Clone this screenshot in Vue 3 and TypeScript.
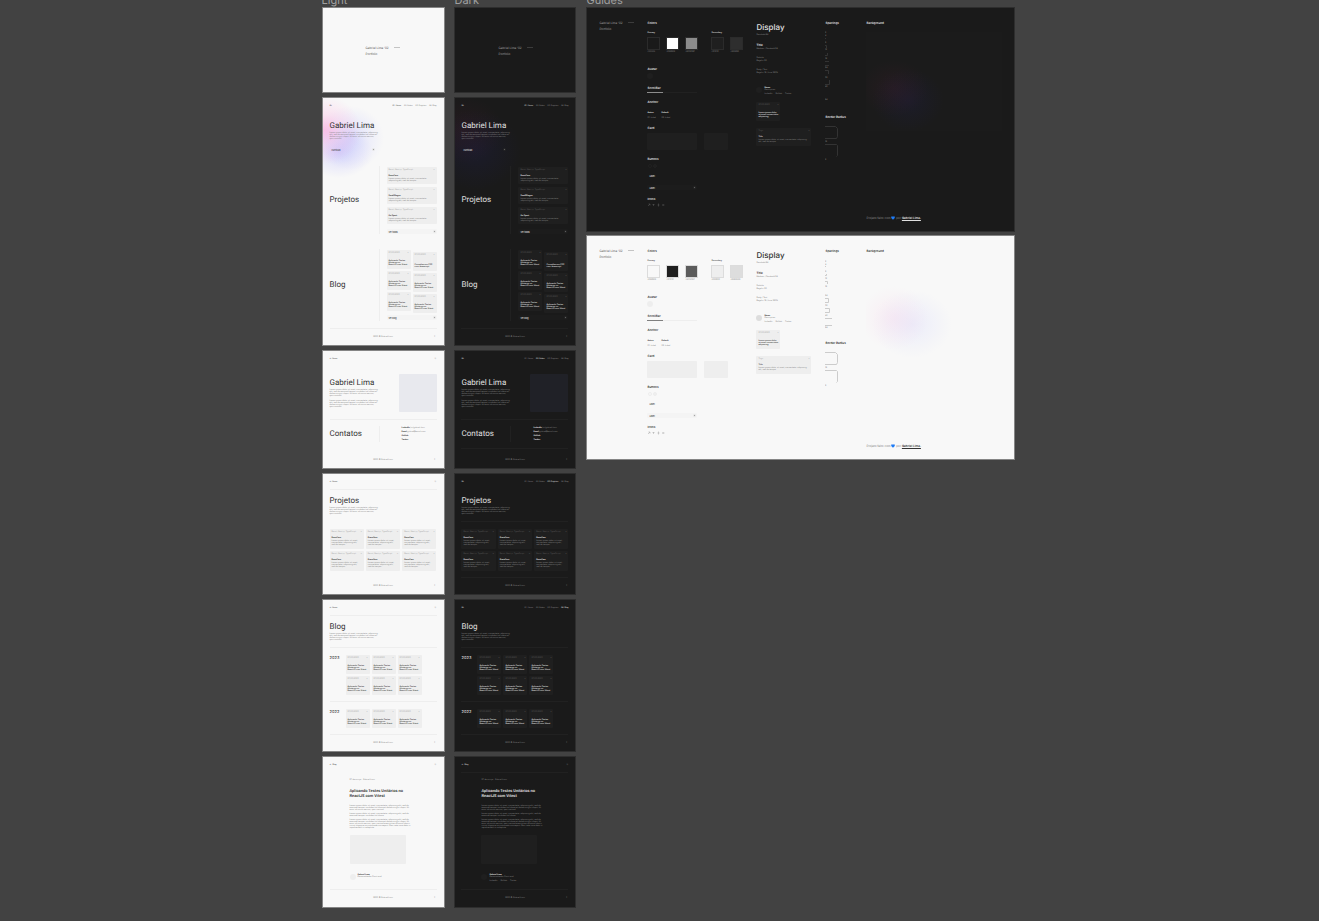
<script setup lang="ts">
type Theme = 'light' | 'dark'

interface Mark {
  d?: string
  label?: string
  y?: number
}

const themes: Theme[] = ['light', 'dark']
const guideThemes: Theme[] = ['dark', 'light']
const titles: Record<Theme, string> = { light: 'Light', dark: 'Dark' }
const links = ['01. Home', '02. Sobre', '03. Projetos', '04. Blog']
const lorem =
  'Lorem ipsum dolor sit amet, consectetur adipiscing elit, sed do eiusmod tempor incididunt ut labore et dolore magna aliqua. Ut enim ad minim veniam, quis nostrud.'
const mediumLorem = 'Lorem ipsum dolor sit amet, consectetur adipiscing elit, sed do eiusmod tempor incididunt ut labore.'
const longLorem =
  'Lorem ipsum dolor sit amet, consectetur adipiscing elit, sed do eiusmod tempor incididunt ut labore et dolore magna aliqua. Ut enim ad minim veniam, quis nostrud exercitation ullamco laboris nisi ut aliquip ex ea commodo consequat. Duis aute irure dolor in reprehenderit in voluptate.'
const shortLorem = 'Lorem ipsum dolor sit amet, consectetur adipiscing elit, sed do tempor.'
const projects = ['BrainCare', 'SmallBlogue', 'Go Sport']
const postTitle = 'Aplicando Testes Unitários no ReactJS com Vitest'
const rightPosts = ['Consultas em CSS com Javascript', postTitle, postTitle]
const contacts = [
  ['LinkedIn', '/in/gabriel-lima'],
  ['Email', 'gabriel@email.com'],
  ['GitHub', ''],
  ['Twitter', ''],
]
const years = [
  { year: '2023', count: 6 },
  { year: '2022', count: 3 },
]
const swatches: Record<Theme, string[][]> = {
  dark: [['s-base', '#1A1A1A'], ['s-white', '#F8F8F8'], ['s-mid', '#8C8C8C'], ['s-card', '#1F1F1F'], ['s-line', '#2E2E2E']],
  light: [['s-paper', '#F8F8F8'], ['s-ink', '#1F1F1F'], ['s-deep', '#5C5C5C'], ['s-soft', '#EEEEEE'], ['s-edge', '#DDDDDD']],
}
const marks: Record<Theme, Mark[]> = {
  dark: [
    { label: '2', y: 3 }, { label: '4', y: 6 }, { d: 'M0 8.5H1' }, { label: '8', y: 13 },
    { d: 'M0 15.5H1.5V18' }, { label: '12', y: 20 }, { d: 'M2.5 23V25.5H0' }, { label: '16', y: 29 },
    { d: 'M0 31.5H4M0 35.5H4' }, { label: '24', y: 38 }, { d: 'M0 40.5H3.5V44' }, { label: '32', y: 48 },
    { d: 'M4.5 50V54.5H0' }, { label: '40', y: 57 }, { label: '64', y: 70 },
  ],
  light: [
    { label: '2', y: 4 }, { label: '4', y: 7 }, { d: 'M0 8.5H1' }, { label: '8', y: 14 },
    { d: 'M1.5 16V17.5H0' }, { label: '12', y: 21 }, { d: 'M0 23.5H2.5V26' }, { label: '16', y: 29 },
    { label: '24', y: 38 }, { d: 'M0 40.5H3.5V44.5H0' }, { label: '32', y: 48 },
    { d: 'M0 50.5H4.5V54.5H0' }, { label: '40', y: 58 }, { d: 'M0 60.5H7M0 67.5H7' }, { label: '64', y: 70 },
  ],
}
</script>

<template>
  <main class="canvas">
    <section v-for="(t, i) in themes" :key="t" class="board" :class="[t, i === 0 ? 'first' : 'second']">
      <h2 class="label">{{ titles[t] }}</h2>

      <article class="frame cover">
        <div class="brand">
          <p>Gabriel Lima '02 <i class="dash"></i></p>
          <p>Portfolio</p>
        </div>
      </article>

      <article class="frame home">
        <div class="glow"></div>
        <header class="nav">
          <a href="#" class="logo">GL</a>
          <nav><a v-for="(l, n) in links" :key="l" href="#" :class="{ on: n === 0 }">{{ l }}</a></nav>
        </header>
        <div class="hero">
          <h1>Gabriel Lima</h1>
          <p class="text lines4">{{ lorem }}</p>
          <button type="button" class="wide"><span>Currículo</span><i class="dot"></i></button>
        </div>
        <div class="split projects">
          <h1>Projetos</h1>
          <div class="side">
            <div class="stack">
              <div v-for="p in projects" :key="p" class="card">
                <div class="meta"><span>React, Next.js, TypeScript</span><i class="arrow">↗</i></div>
                <h3>{{ p }}</h3>
                <p class="desc">{{ shortLorem }}</p>
              </div>
            </div>
            <button type="button" class="wide more"><span>Ver todos</span><i class="dot"></i></button>
          </div>
        </div>
        <div class="split blog">
          <h1>Blog</h1>
          <div class="side">
            <div class="pair">
              <div class="posts">
                <div v-for="n in 3" :key="n" class="card post">
                  <div class="meta"><span>27/03/2023</span><i class="arrow">↗</i></div>
                  <h4>{{ postTitle }}</h4>
                </div>
              </div>
              <div class="posts lower">
                <div v-for="(p, n) in rightPosts" :key="n" class="card post">
                  <div class="meta"><span>27/03/2023</span><i class="arrow">↗</i></div>
                  <h4>{{ p }}</h4>
                </div>
              </div>
            </div>
            <button type="button" class="wide more"><span>Ver blog</span><i class="dot"></i></button>
          </div>
        </div>
        <hr class="gap7" />
        <footer><span>2023 © Gabriel Lima</span><a href="#">↑</a></footer>
      </article>

      <article class="frame about">
        <header class="nav">
          <a href="#" class="logo">{{ t === 'light' ? '← Home' : 'GL' }}</a>
          <a v-if="t === 'light'" href="#">☼</a>
          <nav v-else><a v-for="(l, n) in links" :key="l" href="#" :class="{ on: n === 1 }">{{ l }}</a></nav>
        </header>
        <div class="intro">
          <div class="bio">
            <h1>Gabriel Lima</h1>
            <p class="text lines4">{{ lorem }}</p>
            <p class="text lines4 next">{{ lorem }}</p>
          </div>
          <div class="photo"></div>
        </div>
        <hr class="gap7" />
        <div class="split contact">
          <h1>Contatos</h1>
          <ul>
            <li v-for="c in contacts" :key="c[0]"><b>{{ c[0] }}</b> {{ c[1] }}</li>
          </ul>
        </div>
        <hr class="gap6 dark-only" />
        <footer class="low"><span>2023 © Gabriel Lima</span><a href="#">↑</a></footer>
      </article>

      <article class="frame list">
        <header class="nav">
          <a href="#" class="logo">{{ t === 'light' ? '← Home' : 'GL' }}</a>
          <a v-if="t === 'light'" href="#">☼</a>
          <nav v-else><a v-for="(l, n) in links" :key="l" href="#" :class="{ on: n === 2 }">{{ l }}</a></nav>
        </header>
        <hr class="gap6 light-only" />
        <div class="head">
          <h1>Projetos</h1>
          <p class="text lines4">{{ lorem }}</p>
        </div>
        <hr class="gap6 dark-only" />
        <div class="grid">
          <div v-for="n in 6" :key="n" class="card tall">
            <div class="meta"><span>React, Next.js, TypeScript</span><i class="arrow">↗</i></div>
            <h3>BrainCare</h3>
            <p class="desc three">{{ shortLorem }}</p>
          </div>
        </div>
        <hr class="gap6 dark-only" />
        <footer><span>2023 © Gabriel Lima</span><a href="#">↑</a></footer>
      </article>

      <article class="frame archive">
        <header class="nav">
          <a href="#" class="logo">{{ t === 'light' ? '← Home' : 'GL' }}</a>
          <a v-if="t === 'light'" href="#">☼</a>
          <nav v-else><a v-for="(l, n) in links" :key="l" href="#" :class="{ on: n === 3 }">{{ l }}</a></nav>
        </header>
        <hr class="gap6 light-only" />
        <div class="head">
          <h1>Blog</h1>
          <p class="text lines4">{{ lorem }}</p>
        </div>
        <template v-for="y in years" :key="y.year">
          <hr class="gap6" />
          <div class="year">
            <h2>{{ y.year }}</h2>
            <div class="trio">
              <div v-for="n in y.count" :key="n" class="card post">
                <div class="meta"><span>27/03/2023</span><i class="arrow">↗</i></div>
                <h4>{{ postTitle }}</h4>
              </div>
            </div>
          </div>
        </template>
        <hr class="gap6" />
        <footer><span>2023 © Gabriel Lima</span><a href="#">↑</a></footer>
      </article>

      <article class="frame single">
        <header class="nav">
          <a href="#" class="logo">←&nbsp; Blog</a>
          <a href="#">☼</a>
        </header>
        <hr class="gap6 dark-only" />
        <div class="entry">
          <p class="date">27 de março &nbsp; Gabriel Lima</p>
          <h1>Aplicando Testes Unitários no ReactJS com Vitest</h1>
          <p class="body l3">{{ lorem }}</p>
          <p class="body l2">{{ mediumLorem }}</p>
          <p class="body l5">{{ longLorem }}</p>
          <div class="figure"></div>
          <div class="author">
            <i class="avatar"></i>
            <div>
              <b>Gabriel Lima</b>
              <p>Desenvolvedor Front-end</p>
              <p v-if="t === 'dark'" class="social"><a href="#">LinkedIn</a><a href="#">GitHub</a><a href="#">Twitter</a></p>
            </div>
          </div>
        </div>
        <hr class="gap6" />
        <footer><span>2023 © Gabriel Lima</span><a href="#">↑</a></footer>
      </article>
    </section>

    <section class="board guides">
      <h2 class="label">Guides</h2>
      <article v-for="t in guideThemes" :key="t" class="frame guide" :class="t">
        <div class="brand">
          <p>Gabriel Lima '02 <i class="dash"></i></p>
          <p>Portfolio</p>
        </div>

        <div class="tokens">
          <h3>Colors</h3>
          <div class="names"><span>Primary</span><span>Secondary</span></div>
          <div class="swatches">
            <div v-for="s in swatches[t]" :key="s[1]"><i :class="s[0]"></i><small>{{ s[1] }}</small></div>
          </div>
          <h3 class="m14">Avatar</h3>
          <i class="avatar"></i>
          <h3 class="m7">ScrollBar</h3>
          <div class="track"><i></i></div>
          <h3 class="m7">Anchor</h3>
          <div class="anchors"><b>Active</b><b>Default</b><a href="#">01. Label</a><a href="#">02. Label</a></div>
          <h3 class="m7">Card</h3>
          <div class="blocks"><i></i><i></i></div>
          <h3 class="m7">Buttons</h3>
          <div class="rounds"><i></i><i></i></div>
          <button type="button" class="chip">Label</button>
          <button type="button" class="wide"><span>Label</span><i class="dot"></i></button>
          <h3 class="m7">Icons</h3>
          <svg class="icons" viewBox="0 0 20 4" aria-hidden="true">
            <path d="M1 3 3 1M1.5 1H3V2.5M6.5 3V1M5.5 2 6.5 1 7.5 2M11.5 .5V3.5M10.5 2H12.5M15.5 2H17.5M16.5 1 15.5 2 16.5 3" />
          </svg>
        </div>

        <div class="type">
          <h1>Display</h1>
          <p>Semibold 64</p>
          <h3 class="m7">Title</h3>
          <p class="m1">Medium / Semibold 24</p>
          <p class="m7">Subtitle</p>
          <p class="m1">Regular 20</p>
          <p class="m7">Body / Text</p>
          <p class="m1">Regular 16 / Line 160%</p>
          <div class="author">
            <i class="avatar"></i>
            <div>
              <b>Name</b>
              <p>Description</p>
              <p class="social"><a href="#">LinkedIn</a><a href="#">GitHub</a><a href="#">Twitter</a></p>
            </div>
          </div>
          <div class="card post m7">
            <div class="meta"><span>27/03/2023</span><i class="arrow">↗</i></div>
            <h4>Lorem ipsum dolor sit amet consectetur adipiscing</h4>
          </div>
          <div class="card sample m7">
            <div class="meta"><span>Tags</span><i class="arrow">↗</i></div>
            <h3>Title</h3>
            <p class="desc">{{ shortLorem }}</p>
          </div>
        </div>

        <div class="scale">
          <h3>Spacings</h3>
          <svg class="steps" viewBox="0 0 20 80" aria-hidden="true">
            <template v-for="(m, n) in marks[t]" :key="n">
              <path v-if="m.d" :d="m.d" />
              <text v-else x="0" :y="m.y">{{ m.label }}</text>
            </template>
          </svg>
          <h3>Border Radius</h3>
          <svg class="radii" viewBox="0 0 20 42" aria-hidden="true">
            <path d="M0 7.5H10.5L12.5 9.5V17.5L11.5 19.5H0M0 25.5H11.5L12.5 26.5V36.5L11.5 37.5" />
            <text x="0" y="23">16</text>
            <text x="0" y="41">8</text>
          </svg>
        </div>

        <div class="backdrop">
          <h3>Background</h3>
          <div class="aura"></div>
          <p class="credit">
            Projeto feito com
            <svg viewBox="0 0 8 8" role="img" aria-label="coração"><path d="M4 7.5C1.6 5.6 .3 4 .3 2.4 .3 .3 2.9 0 4 1.7 5.1 0 7.7 .3 7.7 2.4 7.7 4 6.4 5.6 4 7.5Z" /></svg>
            por <a href="#">Gabriel Lima.</a>
          </p>
        </div>
      </article>
    </section>
  </main>
</template>

<style>
html,
body {
  background: #424242;
}
</style>

<style scoped>
* {
  box-sizing: border-box;
  margin: 0;
  padding: 0;
}
.canvas {
  display: grid;
  grid-template-columns: 322fr 123fr 10fr 122fr 10fr 428fr 304fr;
  align-items: start;
  min-height: 100vh;
  overflow: hidden;
  background: #424242;
  font-family: Inter, Roboto, 'Liberation Sans', sans-serif;
  text-rendering: geometricPrecision;
}
.board {
  display: flex;
  flex-direction: column;
  gap: 4px;
}
.first { grid-column: 2; }
.second { grid-column: 4; }
.guides {
  grid-column: 6;
  gap: 3px;
}
.label {
  height: 7px;
  margin-bottom: -4px;
  display: flex;
  align-items: flex-end;
  font-size: 11px;
  line-height: 14px;
  font-weight: 400;
  color: #a0a0a0;
}
.guides .label { margin-bottom: -3px; }
.light {
  --bg: #f8f8f8;
  --edge: #858585;
  --ink: #333;
  --soft: #808080;
  --faint: #a4a4a4;
  --card: #eeeeee;
  --line: #eeeeee;
  --button: #f4f4f4;
  --photo: #e8e9ee;
  --stroke: #ccc;
}
.dark {
  --bg: #1a1a1a;
  --edge: #2e2e2e;
  --ink: #e0e0e0;
  --soft: #8c8c8c;
  --faint: #5c5c5c;
  --card: #1f1f1f;
  --line: #212121;
  --button: #1c1c1c;
  --photo: #202127;
  --stroke: #484848;
}
.frame {
  position: relative;
  display: flex;
  flex-direction: column;
  padding: 7px;
  border: 1px solid var(--edge);
  background: var(--bg);
  color: var(--ink);
  font-size: 2px;
  line-height: 2px;
}
.board.dark .frame { padding-left: 6px; }
.board .frame.cover { min-height: 86px; padding: 37px 7px 0 43px; }
.home { min-height: 249px; }
.about { min-height: 119px; }
.list { min-height: 122px; }
.archive { min-height: 153px; }
.single { min-height: 152px; }
a { color: inherit; text-decoration: none; }
i { font-style: normal; }
ul { list-style: none; }
.brand {
  font-size: 3px;
  line-height: 6px;
  white-space: nowrap;
  color: #a0a0a0;
}
.light .brand, .light.guide .brand { color: #555; }
.guide .brand { margin-top: -1px; }
.dash {
  display: inline-block;
  width: 6px;
  height: 1px;
  margin-left: 4px;
  vertical-align: 1px;
  background: var(--faint);
}
.dark .dash { background: #3c3c3c; }
.light .dash { background: #c4c4c4; }
.glow {
  position: absolute;
  inset: 0;
  background:
    radial-gradient(ellipse 36px 34px at 2px 32px, rgba(255, 160, 218, 0.6), rgba(255, 170, 222, 0.28) 45%, transparent),
    radial-gradient(ellipse 34px 26px at 16px 54px, rgba(165, 165, 255, 0.42), rgba(175, 175, 255, 0.2) 50%, transparent),
    radial-gradient(ellipse 34px 32px at 27px 40px, rgba(165, 170, 255, 0.38), rgba(180, 182, 255, 0.18) 50%, transparent);
}
.dark .glow {
  background:
    radial-gradient(ellipse 40px 34px at 8px 32px, rgba(110, 30, 60, 0.13), transparent),
    radial-gradient(ellipse 46px 40px at 20px 52px, rgba(35, 35, 130, 0.16), transparent);
}
.glow ~ * { position: relative; }
.nav {
  display: flex;
  justify-content: space-between;
  height: 2px;
  color: var(--soft);
  white-space: nowrap;
  font-family: Roboto, Inter, sans-serif;
}
.nav nav { display: flex; gap: 3px; }
.nav .logo, .nav .on { color: var(--ink); }
h1 {
  font-family: Roboto, Inter, sans-serif;
  font-size: 8px;
  line-height: 10px;
  font-weight: 400;
}
.hero { margin-top: 14px; width: 49px; }
.text {
  width: 49px;
  margin-top: 1px;
  color: var(--soft);
}
.lines4 { height: 8px; }
.text.next { margin-top: 3px; }
.wide {
  display: flex;
  align-items: center;
  justify-content: space-between;
  width: 100%;
  height: 5px;
  padding: 0 1px 0 2px;
  border: 0;
  border-radius: 1px;
  background: var(--button);
  color: var(--ink);
  font: inherit;
  line-height: 2px;
  font-weight: 500;
}
.hero .wide { width: 46px; margin-top: 7px; background: transparent; }
.dot {
  width: 3px;
  height: 3px;
  border-radius: 50%;
  border: 1px solid var(--line);
  background: var(--faint);
}
.split {
  display: grid;
  grid-template-columns: 50px 1fr;
  column-gap: 7px;
}
.split h1 {
  display: flex;
  align-items: center;
  border-right: 1px solid var(--line);
}
.projects { margin-top: 14px; min-height: 68px; }
.blog { margin-top: 15px; min-height: 72px; }
.side {
  display: flex;
  flex-direction: column;
  padding-top: 1px;
}
.stack { display: grid; gap: 3px; }
.projects .more { margin-top: 5px; }
.blog .more { margin-top: 2px; }
.card {
  height: 17px;
  padding: 2px;
  border-radius: 1px;
  background: var(--card);
}
.meta {
  display: flex;
  justify-content: space-between;
  white-space: nowrap;
  color: var(--faint);
}
.meta .arrow { color: var(--soft); }
.card h3 {
  margin-top: 4px;
  font-size: 2px;
  line-height: 2px;
  font-weight: 700;
}
.desc {
  height: 4px;
  margin-top: 1px;
  width: 95%;
  color: var(--soft);
}
.desc.three { height: 6px; }
.pair {
  display: grid;
  grid-template-columns: 24px 24px;
  gap: 2px;
}
.posts { display: grid; gap: 2px; align-content: start; }
.lower { padding-top: 2px; }
.card.post {
  display: flex;
  flex-direction: column;
  justify-content: space-between;
  height: 19px;
  padding: 2px 2px 3px;
}
.post h4 { font-size: 2px; line-height: 2px; font-weight: 600; }
hr {
  border: 0;
  height: 1px;
  flex: none;
  background: var(--line);
}
.gap6 { margin-top: 6px; }
.gap7 { margin-top: 7px; }
.light .dark-only, .dark .light-only { background: transparent; }
footer {
  position: relative;
  display: grid;
  grid-template-columns: 1fr auto 1fr;
  margin-top: 7px;
  color: var(--soft);
}
footer span { grid-column: 2; white-space: nowrap; }
footer a { justify-self: end; padding-right: 1px; }
footer.low { margin-top: 10px; }
.intro {
  display: flex;
  justify-content: space-between;
  margin-top: 14px;
}
.bio { padding-top: 4px; }
.photo {
  width: 38px;
  height: 38px;
  border-radius: 1px;
  background: var(--photo);
}
.contact { margin-top: 6px; min-height: 16px; }
.contact ul {
  padding-left: 15px;
  line-height: 4px;
  color: var(--soft);
  white-space: nowrap;
}
.contact b { color: var(--ink); }
.head { margin-top: 6px; }
.grid {
  display: grid;
  grid-template-columns: repeat(3, 1fr);
  gap: 2px;
  margin-top: 7px;
}
.card.tall { height: 20px; }
.year {
  display: grid;
  grid-template-columns: 16px 1fr;
  margin-top: 7px;
}
.year h2 {
  font-size: 4px;
  line-height: 6px;
  font-weight: 400;
}
.trio {
  display: grid;
  grid-template-columns: repeat(3, 24px);
  gap: 2px;
}
.entry { padding: 6px 20px 0; }
.date { color: var(--soft); white-space: nowrap; }
.entry h1 {
  margin-top: 7px;
  font-size: 4px;
  line-height: 5px;
  font-weight: 600;
}
.body {
  width: 64px;
  margin-top: 2px;
  color: var(--soft);
}
.l3 { height: 6px; margin-top: 7px; }
.l2 { height: 4px; }
.l5 { height: 10px; }
.figure {
  width: 56px;
  height: 29px;
  margin-top: 6px;
  border-radius: 1px;
  background: var(--card);
}
.author {
  display: flex;
  gap: 2px;
  margin-top: 10px;
  min-height: 9px;
  color: var(--soft);
  white-space: nowrap;
}
.author b { display: block; color: var(--ink); }
.avatar {
  display: block;
  flex: none;
  width: 6px;
  height: 6px;
  border-radius: 50%;
  background: var(--card);
}
.social { display: flex; gap: 3px; margin-top: 2px; }

.guide {
  display: grid;
  grid-template-columns: 48px 109px 69px 41px 1fr;
  min-height: 225px;
  padding: 13px 12px 11px;
}
.guide h3 {
  font-size: 3px;
  line-height: 4px;
  font-weight: 600;
  white-space: nowrap;
}
.guide .card h3 { font-size: 2px; line-height: 2px; }
.m1 { margin-top: 1px; }
.m7 { margin-top: 7px; }
.m14 { margin-top: 14px; }
.names {
  display: grid;
  grid-template-columns: 64px 1fr;
  margin-top: 7px;
  font-weight: 600;
}
.swatches { display: flex; gap: 6px; margin-top: 3px; }
.swatches div { width: 13px; }
.swatches div:nth-child(4) { margin-left: 7px; }
.swatches i {
  display: block;
  height: 13px;
  border: 1px solid var(--swatch-edge);
}
.guide.dark { --swatch-edge: #2b2b2b; }
.guide.light { --swatch-edge: #dcdcdc; }
.swatches small {
  display: block;
  margin-top: 1px;
  font-size: 2px;
  color: var(--soft);
}
.s-base { background: #1a1a1a; }
.s-white { background: #fff; }
.s-mid { background: #8c8c8c; }
.s-card { background: #1f1f1f; }
.s-line { background: #2e2e2e; }
.s-paper { background: #f8f8f8; }
.s-ink { background: #1f1f1f; }
.s-deep { background: #5c5c5c; }
.s-soft { background: #eee; }
.s-edge { background: #ddd; }
.tokens .avatar { margin-top: 2px; }
.track {
  width: 50px;
  height: 1px;
  margin: 2px 0 1px;
  background: var(--line);
}
.track i {
  display: block;
  width: 16px;
  height: 1px;
  background: var(--soft);
}
.anchors {
  display: grid;
  grid-template-columns: 14px 1fr;
  row-gap: 3px;
  margin-top: 8px;
}
.anchors a { color: var(--soft); }
.blocks { display: flex; gap: 7px; margin-top: 3px; }
.blocks i {
  width: 50px;
  height: 17px;
  border-radius: 1px;
  background: var(--card);
}
.blocks i + i { width: 24px; }
.rounds { display: flex; gap: 1px; margin-top: 3px; padding-left: 1px; }
.rounds i {
  width: 4px;
  height: 4px;
  border-radius: 50%;
  border: 1px solid var(--line);
}
.rounds i + i { background: var(--card); }
.chip {
  display: block;
  height: 4px;
  margin-top: 6px;
  padding: 0 2px;
  border: 0;
  background: transparent;
  color: var(--ink);
  font: inherit;
  font-weight: 500;
}
.guide .wide { width: 50px; margin-top: 7px; }
.icons {
  display: block;
  width: 20px;
  height: 4px;
  margin-top: 2px;
  fill: none;
  stroke: var(--faint);
  stroke-width: 0.5;
}
.type { color: var(--soft); }
.type > p { white-space: nowrap; }
.type h1 {
  font-family: Inter, Roboto, sans-serif;
  line-height: 12px;
  font-weight: 500;
  color: var(--ink);
}
.type h1 + p { margin-top: 1px; }
.type h3, .type h4 { color: var(--ink); }
.type .author { margin-top: 13px; min-height: 8px; }
.guide.light .type .avatar { background: #ddd; }
.type .post { width: 24px; }
.sample { width: 55px; height: 18px; }
.steps {
  display: block;
  width: 20px;
  height: 80px;
  margin-top: 5px;
}
.dark .steps { margin-bottom: 5px; }
.light .steps { margin-bottom: 3px; }
.radii {
  display: block;
  width: 20px;
  height: 42px;
}
.scale path { fill: none; stroke: var(--stroke); }
.dark .scale path { stroke: #333; }
.scale text { font-size: 2px; fill: var(--soft); }
.backdrop { display: flex; flex-direction: column; }
.aura {
  width: 136px;
  height: 99px;
  margin-top: 7px;
}
.light .aura {
  background:
    radial-gradient(ellipse 34px 32px at 28px 58px, rgba(255, 185, 220, 0.18), transparent),
    radial-gradient(ellipse 40px 34px at 46px 64px, rgba(185, 190, 255, 0.2), transparent);
}
.dark .aura {
  background:
    radial-gradient(ellipse 34px 28px at 28px 56px, rgba(110, 30, 60, 0.13), transparent),
    radial-gradient(ellipse 36px 32px at 42px 68px, rgba(35, 35, 130, 0.14), transparent),
    #1b1b1b;
}
.credit {
  margin-top: auto;
  font-size: 3px;
  line-height: 4px;
  color: var(--soft);
  white-space: nowrap;
}
.credit svg {
  width: 4px;
  height: 4px;
  vertical-align: -1px;
  fill: #1f7bf5;
}
.credit a {
  color: var(--ink);
  font-weight: 600;
  text-decoration: underline;
}
</style>
